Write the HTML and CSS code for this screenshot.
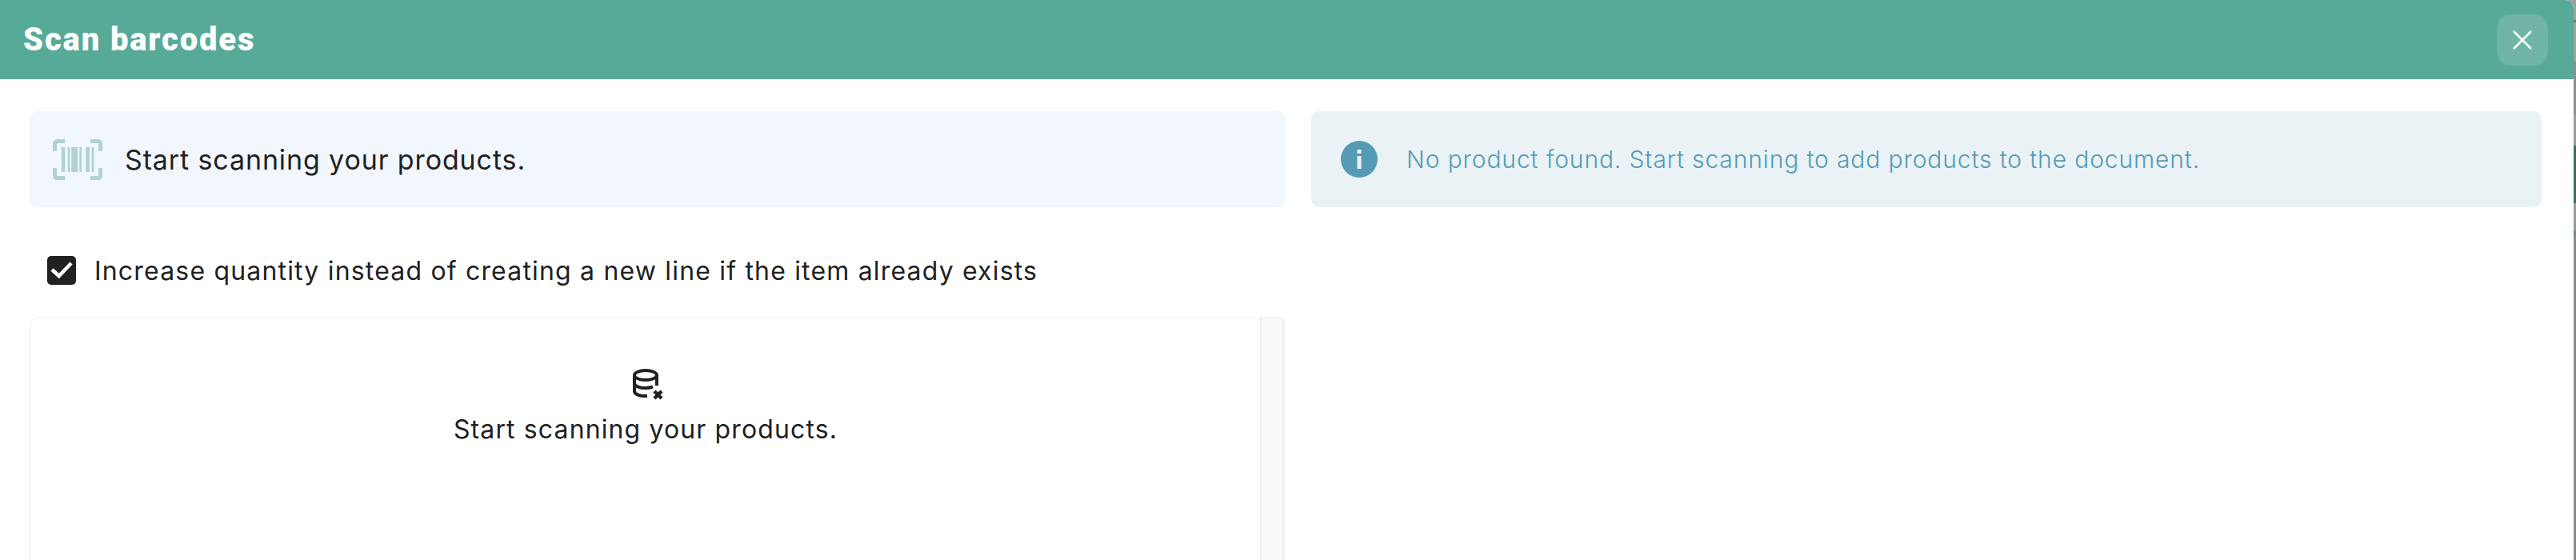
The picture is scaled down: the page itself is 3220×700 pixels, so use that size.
FILE: index.html
```html
<!DOCTYPE html>
<html lang="en">
<head>
<meta charset="utf-8">
<title>Scan barcodes</title>
<link rel="stylesheet" href="styles.css">
</head>
<body>
<div class="backdrop">
  <div class="modal">
    <header class="modal-header">
      <h1 class="modal-title">Scan barcodes</h1>
      <button class="close-btn" type="button" aria-label="Close">
        <svg class="close-icon" viewBox="0 0 24 24"><path d="M1 1L23 23M23 1L1 23"/></svg>
      </button>
    </header>
    <div class="modal-body">
      <div class="left-col">
        <div class="scan-banner">
          <svg class="barcode-icon" viewBox="0 0 62 51">
            <path class="corner" d="M15 2.500H5.500a3 3 0 0 0-3 3V15M47 2.500h9.500a3 3 0 0 1 3 3V15M15 48.500H5.500a3 3 0 0 1-3-3V36M47 48.500h9.500a3 3 0 0 0 3-3V36"/>
            <path class="bars" d="M10.700 10h4.600v31h-4.600zM18.700 10h2.600v31h-2.600zM23.300 10h8v31h-8zM33.300 10h2.700v31h-2.700zM41.300 10h4.700v31h-4.700zM48.700 10h2.600v31h-2.600z"/>
          </svg>
          <span class="scan-text">Start scanning your products.</span>
        </div>
        <label class="check-row">
          <span class="checkbox">
            <svg class="check-mark" viewBox="0 0 36 36"><path d="M6 17L14.700 25L30 9"/></svg>
          </span>
          <span class="check-label">Increase quantity instead of creating a new line if the item already exists</span>
        </label>
        <div class="list-panel">
          <div class="list-empty">
            <svg class="db-icon" viewBox="0 0 38 39">
              <ellipse cx="16" cy="8" rx="14" ry="6"/>
              <path d="M2 8V28c0 3.500 6 6 14 6h2"/>
              <path d="M30 8V21"/>
              <path d="M2 18c0 3.500 6 6 14 6c3 0 6-.5 9-1.500"/>
              <path class="db-x" d="M27 28L36 37M36 28L27 37"/>
            </svg>
            <span class="empty-text">Start scanning your products.</span>
          </div>
          <div class="list-scroll"></div>
        </div>
      </div>
      <div class="right-col">
        <div class="info-banner">
          <svg class="info-icon" viewBox="0 0 46 46">
            <circle cx="23" cy="23" r="23"/>
            <rect x="20.500" y="11" width="5" height="5"/>
            <rect x="20.500" y="19" width="5" height="16"/>
          </svg>
          <span class="info-text">No product found. Start scanning to add products to the document.</span>
        </div>
      </div>
    </div>
  </div>
</div>
</body>
</html>
```

FILE: styles.css
```css
* { box-sizing: border-box; }
html, body { margin: 0; height: 100%; overflow: hidden; }
body {
  font-family: "Inter", "Liberation Sans", sans-serif;
  color: #212121;
  background: linear-gradient(to bottom,
    #a0a0a0 0 25px, #4f8a7b 25px 28px, #a0a0a0 28px 77px,
    #8e8e8e 77px 142px, #999 142px 182px, #3a6e62 182px 254px,
    #9a9a9a 254px 288px, #6e8f88 288px 294px, #8b8b8e 294px);
}
.backdrop { height: 700px; padding-right: 3px; }
.modal { height: 700px; background: #fff; border-top-right-radius: 10px; overflow: hidden; display: flex; flex-direction: column; }
.modal-header { height: 99px; flex: none; background: #58aa98; display: flex; align-items: center; justify-content: space-between; padding: 0 32px 0 29px; }
.modal-title { margin: 0; font-family: "Roboto", sans-serif; font-weight: 900; font-size: 40px; line-height: 1; letter-spacing: 1.85px; color: #fff; }
.close-btn { width: 64px; height: 64px; border: 0; padding: 0; border-radius: 18px; background: #6fb4a5; display: flex; align-items: center; justify-content: center; }
.close-icon { width: 24px; height: 24px; fill: none; stroke: #fff; stroke-width: 2.500; }
.modal-body { display: flex; gap: 32px; padding: 40px 0 0 37px; flex: 1; min-height: 0; }
.left-col { width: 1570px; flex: none; display: flex; flex-direction: column; }
.right-col { width: 1538px; flex: none; }
.scan-banner { height: 120px; background: #f2f6fd; border-radius: 10px; display: flex; align-items: center; padding-left: 29px; gap: 28px; }
.barcode-icon { width: 62px; height: 51px; flex: none; }
.corner { fill: none; stroke: #aed4cf; stroke-width: 5; }
.bars { fill: #aed4cf; }
.scan-text { font-size: 34px; letter-spacing: 0.88px; }
.check-row { display: flex; align-items: center; height: 40px; margin-top: 59px; padding-left: 22px; gap: 23px; }
.checkbox { width: 36px; height: 36px; border-radius: 5px; background: #212121; display: flex; flex: none; }
.check-mark { width: 36px; height: 36px; fill: none; stroke: #fff; stroke-width: 4.500; }
.check-label { font-size: 32px; letter-spacing: 1.18px; white-space: nowrap; }
.list-panel { flex: 1; margin-top: 38px; border: 2px solid #f3f6fd; border-bottom: 0; border-radius: 10px 10px 0 0; display: flex; min-height: 0; }
.list-empty { flex: 1; display: flex; flex-direction: column; align-items: center; padding-top: 63px; gap: 17px; }
.db-icon { width: 38px; height: 39px; fill: none; stroke: #212121; stroke-width: 4; margin-left: 6px; }
.db-x { stroke-width: 4.500; }
.empty-text { font-size: 32px; letter-spacing: 1.12px; }
.list-scroll { width: 30px; flex: none; background: #fafafa; border-left: 2px solid #ececec; border-right: 2px solid #f0f0f4; }
.info-banner { height: 120px; background: #eaf2f5; border-radius: 10px; display: flex; align-items: center; padding-left: 37px; gap: 36px; }
.info-icon { width: 46px; height: 46px; flex: none; }
.info-icon circle { fill: #559bb6; }
.info-icon rect { fill: #eaf2f5; }
.info-text { font-size: 30px; font-weight: 300; color: #559bb6; letter-spacing: 0.88px; }
```
